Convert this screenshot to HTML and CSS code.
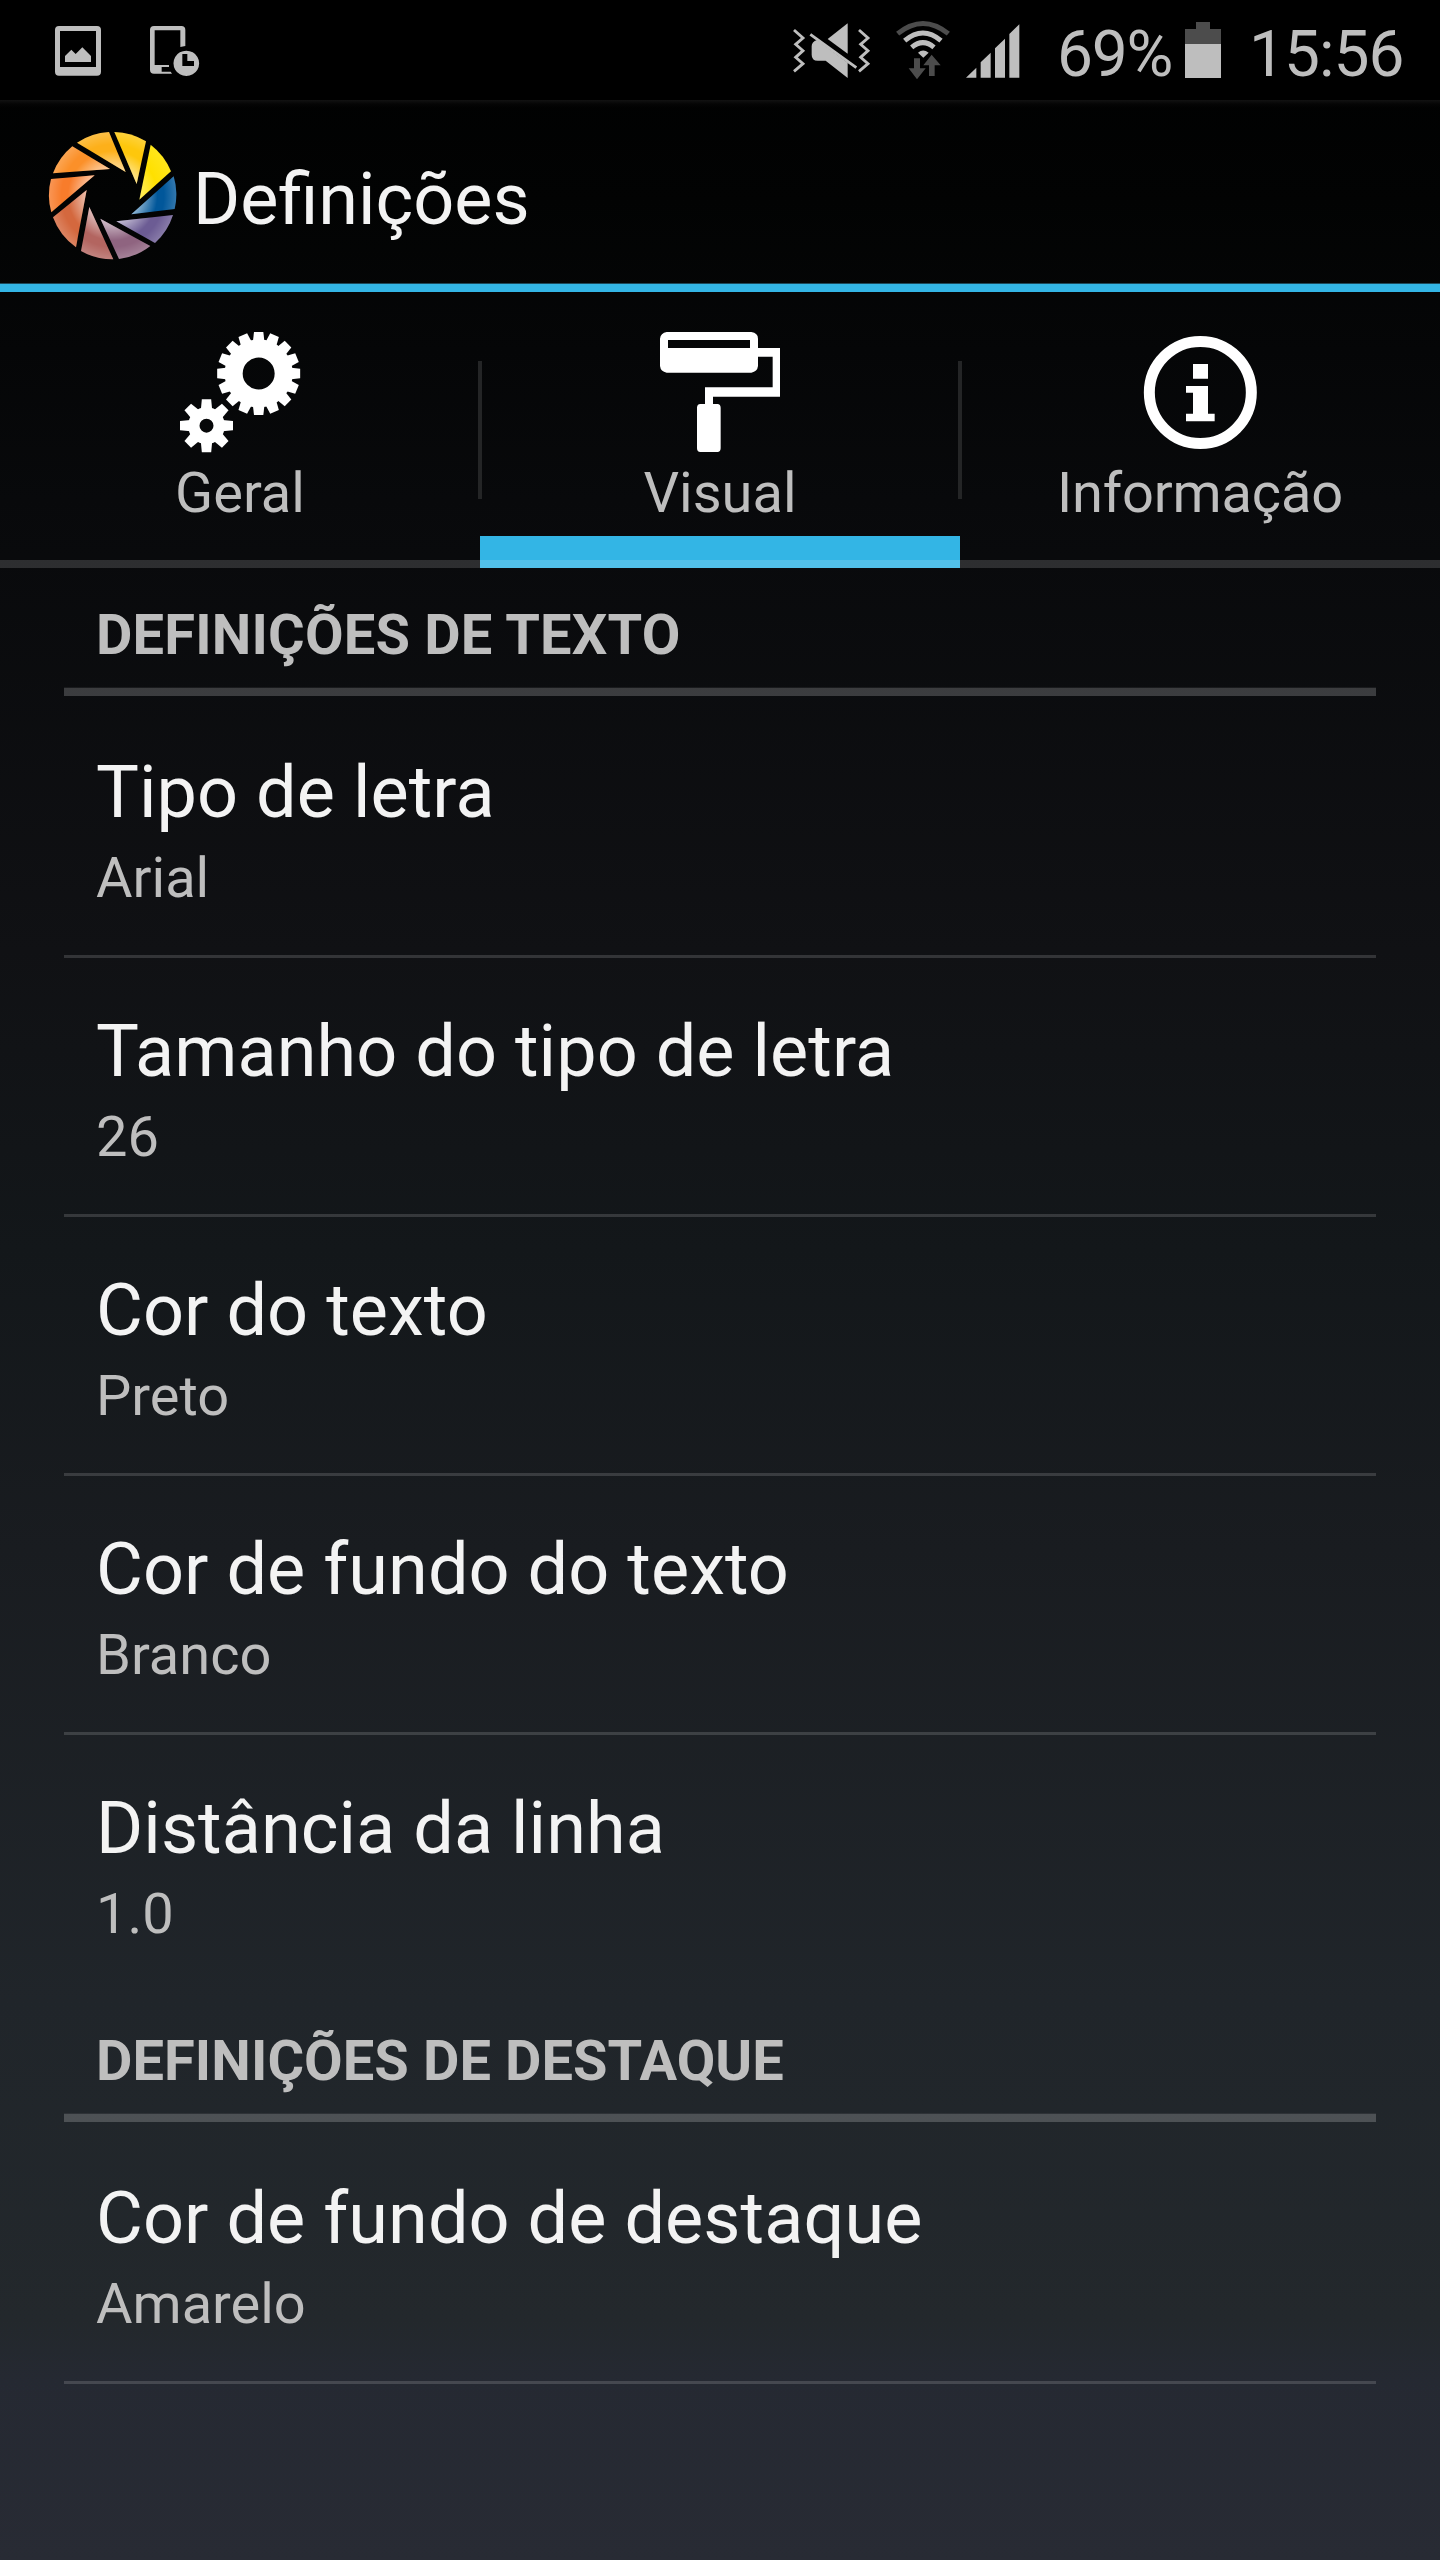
FILE: index.html
```html
<!DOCTYPE html>
<html lang="pt">
<head>
<meta charset="utf-8">
<title>Definições</title>
<link rel="stylesheet" href="styles.css">
</head>
<body>
<div class="screen">
  <div class="status">
    <svg class="status-picture" width="46" height="50" viewBox="75 78 138 150"><path fill-rule="evenodd" d="M87 78H201Q213 78 213 90V215Q213 227 201 227H87Q75 227 75 215V90Q75 78 87 78ZM90 93V201H198V93Z"/><path d="M105 168L124 149L137 162L157 142L183 168V186H105Z"/></svg>
    <svg class="status-device" width="50" height="50" viewBox="359 78 150 150"><path d="M371 78H453Q465 78 465 90V138L450 141V91H373V195H416V201H394V215H421L425 221H371Q359 221 359 209V90Q359 78 371 78Z"/><path fill-rule="evenodd" d="M468 152A38.500 38 0 1 1 467.900 152ZM456 162V198H491V183H471V162Z"/></svg>
    <span class="spacer"></span>
    <svg class="status-mute" width="78" height="56" viewBox="40 70 234 168"><path d="M204 71V162L144 118Z"/><path d="M112 121L204 189V235L138 183H114Q96 183 96 165V140Q96 126 112 121Z"/><path class="line" d="M92 104L230 204M43 91L70 115L48 134L70 153L48 173L70 192L43 215M238 91L265 115L243 134L265 153L243 173L265 192L238 215"/></svg>
    <svg class="status-wifi" width="56" height="60" viewBox="346 62 168 180"><path class="arc dim" d="M354 103Q430 42 506 103"/><path class="arc" d="M375 124Q430 78 484 124M396 144Q430 116 463 144"/><path d="M415 160Q430 147 447 160L431 175Z"/><path class="dim-fill" d="M403 177H421V207H438L412 240L387 207H403ZM456 166L483 198H465V230H448V198H431Z"/></svg>
    <svg class="status-signal" width="54" height="54" viewBox="559 73 162 162"><path d="M559 234L590 204V234ZM603 234V188L633 159V234ZM646 234V146L676 117V234ZM689 234V103L719 74V234Z"/></svg>
    <span class="battery-text">69%</span>
    <svg class="status-battery" width="36" height="56" viewBox="0 0 36 56"><path class="dim-fill" d="M11 0H25V7H36V22H0V7H11Z"/><path d="M0 22H36V56H0Z"/></svg>
    <span class="clock">15:56</span>
  </div>

  <header class="titlebar">
    <svg class="logo" width="128" height="128" viewBox="54 63 384 384">
      <defs>
        <radialGradient id="shine" gradientUnits="userSpaceOnUse" cx="248" cy="257" r="192">
          <stop offset=".38" stop-color="#fff" stop-opacity=".62"/>
          <stop offset=".7" stop-color="#fff" stop-opacity="0"/>
          <stop offset=".8" stop-color="#fff" stop-opacity="0"/>
          <stop offset="1" stop-color="#fff" stop-opacity=".2"/>
        </radialGradient>
        <radialGradient id="sun" gradientUnits="userSpaceOnUse" cx="248" cy="257" r="192">
          <stop offset=".38" stop-color="#fff06a"/>
          <stop offset=".7" stop-color="#ffe000"/>
          <stop offset="1" stop-color="#ffe61c"/>
        </radialGradient>
      </defs>
      <path fill="#fdb01a" d="M141 98A191 191 0 0 1 237 66L287 186Z"/>
      <path fill="#fec70c" d="M253 66A191 191 0 0 1 348 94L320 222Z"/>
      <path fill="#01579a" d="M431 199A191 191 0 0 1 434 297L304 313Z"/>
      <path fill="#6c5c94" d="M429 315A191 191 0 0 1 375 399L259 334Z"/>
      <path fill="#8f6480" d="M361 408A191 191 0 0 1 267 447L211 326Z"/>
      <path fill="#b36560" d="M250 448A191 191 0 0 1 153 423L178 291Z"/>
      <path fill="#d4683e" d="M138 412A191 191 0 0 1 69 322L170 240Z"/>
      <path fill="#f87c2b" d="M64 307A191 191 0 0 1 63 207L194 196Z"/>
      <path fill="#fb9029" d="M69 190A191 191 0 0 1 127 109L240 177Z"/>
      <path fill="url(#shine)" d="M141 98A191 191 0 0 1 237 66L287 186ZM253 66A191 191 0 0 1 348 94L320 222ZM431 199A191 191 0 0 1 434 297L304 313ZM429 315A191 191 0 0 1 375 399L259 334ZM361 408A191 191 0 0 1 267 447L211 326ZM250 448A191 191 0 0 1 153 423L178 291ZM138 412A191 191 0 0 1 69 322L170 240ZM64 307A191 191 0 0 1 63 207L194 196ZM69 190A191 191 0 0 1 127 109L240 177Z"/>
      <path fill="url(#sun)" d="M362 104A191 191 0 0 1 423 184L328 269Z"/>
    </svg>
    <h1>Definições</h1>
  </header>

  <nav class="tabs">
    <div class="tab">
      <svg width="120" height="120" viewBox="0 0 360 360">
        <defs>
          <path id="tooth" d="M-14 -124.500H14L17 -98H-17Z"/>
          <g id="teeth"><use href="#tooth"/><use href="#tooth" transform="rotate(22.500)"/><use href="#tooth" transform="rotate(45)"/><use href="#tooth" transform="rotate(67.500)"/></g>
          <path id="cog" d="M-14 -79.500H14L17 -48H-17Z"/>
        </defs>
        <g transform="translate(236 124.500)">
          <circle class="ring" r="75" stroke-width="54"/>
          <use href="#teeth"/><use href="#teeth" transform="rotate(90)"/><use href="#teeth" transform="rotate(180)"/><use href="#teeth" transform="rotate(270)"/>
        </g>
        <g transform="translate(79.500 281)">
          <circle class="ring" r="38" stroke-width="34"/>
          <use href="#cog"/><use href="#cog" transform="rotate(45)"/><use href="#cog" transform="rotate(90)"/><use href="#cog" transform="rotate(135)"/><use href="#cog" transform="rotate(180)"/><use href="#cog" transform="rotate(225)"/><use href="#cog" transform="rotate(270)"/><use href="#cog" transform="rotate(315)"/>
        </g>
      </svg>
      <span>Geral</span>
    </div>
    <div class="tab active">
      <svg width="120" height="120" viewBox="0 0 360 360"><path fill-rule="evenodd" d="M20 0H274Q294 3 294 20V48H360V194H159V216H172Q182 217 182 227V349Q182 360 172 360H121Q111 360 111 349V227Q111 217 121 216H135V166H338V74H294V102Q292 119 274 122H20Q2 119 0 102V20Q2 3 20 0ZM24 24V48H270V24Z"/></svg>
      <span>Visual</span>
    </div>
    <div class="tab info">
      <svg width="120" height="120" viewBox="0 0 360 360"><circle class="ring" cx="181" cy="181.500" r="153" stroke-width="33"/><path d="M159 96H204V140H159ZM138 162H204V245H224V268H138V245H159V182H138Z"/></svg>
      <span>Informação</span>
    </div>
  </nav>

  <main>
    <section>
      <h2 class="first">DEFINIÇÕES DE TEXTO</h2>
      <div class="item"><b>Tipo de letra</b><span>Arial</span></div>
      <div class="item"><b>Tamanho do tipo de letra</b><span>26</span></div>
      <div class="item"><b>Cor do texto</b><span>Preto</span></div>
      <div class="item"><b>Cor de fundo do texto</b><span>Branco</span></div>
      <div class="item last"><b>Distância da linha</b><span>1.0</span></div>
    </section>
    <section>
      <h2>DEFINIÇÕES DE DESTAQUE</h2>
      <div class="item"><b>Cor de fundo de destaque</b><span>Amarelo</span></div>
    </section>
  </main>
</div>
</body>
</html>
```
FILE: styles.css
```css
* { box-sizing: border-box; }
body { margin: 0; background: #000; }
.screen {
  width: 1440px; height: 2560px; overflow: hidden;
  display: flex; flex-direction: column;
  background: linear-gradient(#000 0, #020303 200px, #08090b 500px, #101114 950px, #13171a 1250px, #191c20 1550px, #20252a 2000px, #23282c 2320px, #252932 2380px, #282b34 2560px);
  color: #f3f3f3;
  font-family: Roboto, "Liberation Sans", sans-serif;
}
svg { display: block; flex: none; overflow: visible; }

.status {
  height: 100px; flex: none; display: flex; align-items: flex-start;
  background: #000; color: #bebebe; fill: #bebebe;
  font-size: 64px; line-height: 75px;
}
.spacer { flex: 1; }
.status-picture { margin: 26px 0 0 55px; }
.status-device { margin: 26px 0 0 49px; }
.status-mute { margin: 23px 24px 0 0; }
.status-wifi { margin: 20px 15px 0 0; }
.status-signal { margin: 24px 37px 0 0; }
.line { fill: none; stroke: #bebebe; stroke-width: 8.5; }
.arc { fill: none; stroke: #bebebe; stroke-width: 15; }
.dim { stroke: #4c4c4c; }
.dim-fill { fill: #4c4c4c; }
.battery-text { width: 128px; margin-top: 17px; letter-spacing: -1.2px; }
.status-battery { margin-top: 22px; }
.clock { width: 219px; margin-top: 17px; padding-left: 28px; letter-spacing: -1px; }

.titlebar {
  height: 192px; flex: none; display: flex; align-items: flex-start;
  border-bottom: 8px solid #33b5e5;
  background: linear-gradient(#121212, #050505 4px, transparent 8px);
  box-shadow: inset 0 -1px #1d4a5b;
}
.logo { margin: 31px 0 0 48px; }
h1 { margin: 58px 0 0 17px; font-size: 72px; line-height: 84px; font-weight: 400; }

.tabs { height: 276px; flex: none; display: flex; box-shadow: inset 0 -8px rgba(255,255,255,.15); }
.tab {
  flex: 1; position: relative; padding-top: 40px;
  display: flex; flex-direction: column; align-items: center;
  color: #bebebe; fill: #fff; font-size: 56px; line-height: 66px;
}
.tab span { margin-top: 8px; }
.info { letter-spacing: -.2px; }
.tab + .tab::before {
  content: ""; position: absolute; left: -2px; top: 69px;
  width: 4px; height: 138px; background: #242526;
}
.active::after {
  content: ""; position: absolute; left: 0; right: 0; bottom: 0; height: 32px;
  background: linear-gradient(#33b5e5 24px, #52c0e9 24px);
}
.ring { fill: none; stroke: #fff; }

main { padding: 0 64px; }
h2 {
  margin: 0 0 3px; height: 128px; padding: 34px 32px 0;
  font-size: 56px; line-height: 66px; font-weight: 700; letter-spacing: .08px; color: #bebebe;
  border-bottom: 8px solid rgba(255,255,255,.2);
  box-shadow: inset 0 -1px rgba(255,255,255,.06);
}
.first { letter-spacing: .2px; }
.item {
  height: 259px; padding: 52px 32px 0;
  display: flex; flex-direction: column;
  border-bottom: 3px solid rgba(255,255,255,.15);
}
.item b { font-weight: 400; font-size: 72px; line-height: 84px; letter-spacing: .06px; }
.item span { margin-top: 10px; font-size: 56px; line-height: 66px; color: #bebebe; }
.last { border-bottom: 0; }
```
